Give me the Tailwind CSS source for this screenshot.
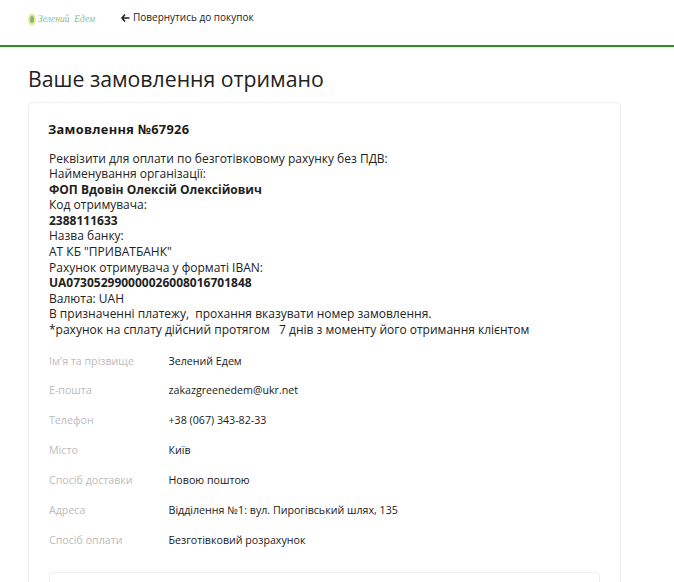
<!DOCTYPE html>
<html lang="uk">
<head>
    <meta charset="UTF-8">
    <title>Ваше замовлення отримано</title>
    <script src="https://cdn.jsdelivr.net/npm/@tailwindcss/browser@4"></script>
</head>
<body class="bg-white font-['Open_Sans',sans-serif] text-[#1a1a1a]">
<div class="h-[582px] overflow-hidden">
<header class="h-[47px] border-b-2 border-[#2f8f1f] flex items-start pl-[28px]">
    <a href="#" class="flex items-center mt-[12px] w-[93px]">
        <svg width="8" height="13" viewBox="0 0 8 13" class="shrink-0">
            <ellipse cx="4" cy="6.5" rx="3.8" ry="6" fill="#e6e88a"/>
            <ellipse cx="4" cy="6.5" rx="2" ry="3.5" fill="#7fb77a"/>
        </svg>
        <span class="ml-[2px] font-['Liberation_Serif',serif] italic text-[9.500px] text-[#8cc084] whitespace-nowrap">Зелений&nbsp; Едем</span>
    </a>
    <a href="#" class="flex items-center mt-[9px] text-[10px] leading-[17px] text-[#222]">
        <svg width="9" height="8" viewBox="0 0 9 8" class="mr-[3px]">
            <path d="M4 .5 1 4l3 3.5M1.2 4H8.500" fill="none" stroke="#222" stroke-width="1.600"/>
        </svg>
        Повернутись до покупок
    </a>
</header>
<main class="px-[28px]">
    <h1 class="text-[21.250px] leading-[28px] mt-[18px] text-[#222]">Ваше замовлення отримано</h1>
    <section class="mt-[9px] w-[593px] border border-[#eeeeee] rounded-[4px] pt-[18px] px-[20px] pb-[20px]">
        <h2 class="text-[12.800px] leading-[17px] font-bold tracking-[0.3px] -ml-[1px]">Замовлення №67926</h2>
        <div class="mt-[12.500px] text-[12px] leading-[15.600px] text-[#222]">
            <p>Реквізити для оплати по безготівковому рахунку без ПДВ:</p>
            <p>Найменування організації:</p>
            <p class="font-bold">ФОП Вдовін Олексій Олексійович</p>
            <p>Код отримувача:</p>
            <p class="font-bold">2388111633</p>
            <p>Назва банку:</p>
            <p>АТ КБ "ПРИВАТБАНК"</p>
            <p>Рахунок отримувача у форматі IBAN:</p>
            <p class="font-bold">UA073052990000026008016701848</p>
            <p>Валюта: UAH</p>
            <p class="whitespace-pre">В призначенні платежу,  прохання вказувати номер замовлення.</p>
            <p class="whitespace-pre">*рахунок на сплату дійсний протягом   7 днів з моменту його отримання клієнтом</p>
        </div>
        <dl class="mt-[9px] text-[10.670px] leading-[29.850px]">
            <div class="flex"><dt class="w-[119.500px] text-[#bbbbbb]">Ім'я та прізвище</dt><dd>Зелений Едем</dd></div>
            <div class="flex"><dt class="w-[119.500px] text-[#bbbbbb]">E-пошта</dt><dd>zakazgreenedem@ukr.net</dd></div>
            <div class="flex"><dt class="w-[119.500px] text-[#bbbbbb]">Телефон</dt><dd>+38 (067) 343-82-33</dd></div>
            <div class="flex"><dt class="w-[119.500px] text-[#bbbbbb]">Місто</dt><dd>Київ</dd></div>
            <div class="flex"><dt class="w-[119.500px] text-[#bbbbbb]">Спосіб доставки</dt><dd>Новою поштою</dd></div>
            <div class="flex"><dt class="w-[119.500px] text-[#bbbbbb]">Адреса</dt><dd>Відділення №1: вул. Пирогівський шлях, 135</dd></div>
            <div class="flex"><dt class="w-[119.500px] text-[#bbbbbb]">Спосіб оплати</dt><dd>Безготівковий розрахунок</dd></div>
        </dl>
        <div class="mt-[16px] h-[60px] border border-[#eeeeee] rounded-[4px]"></div>
    </section>
</main>
</div>
</body>
</html>
